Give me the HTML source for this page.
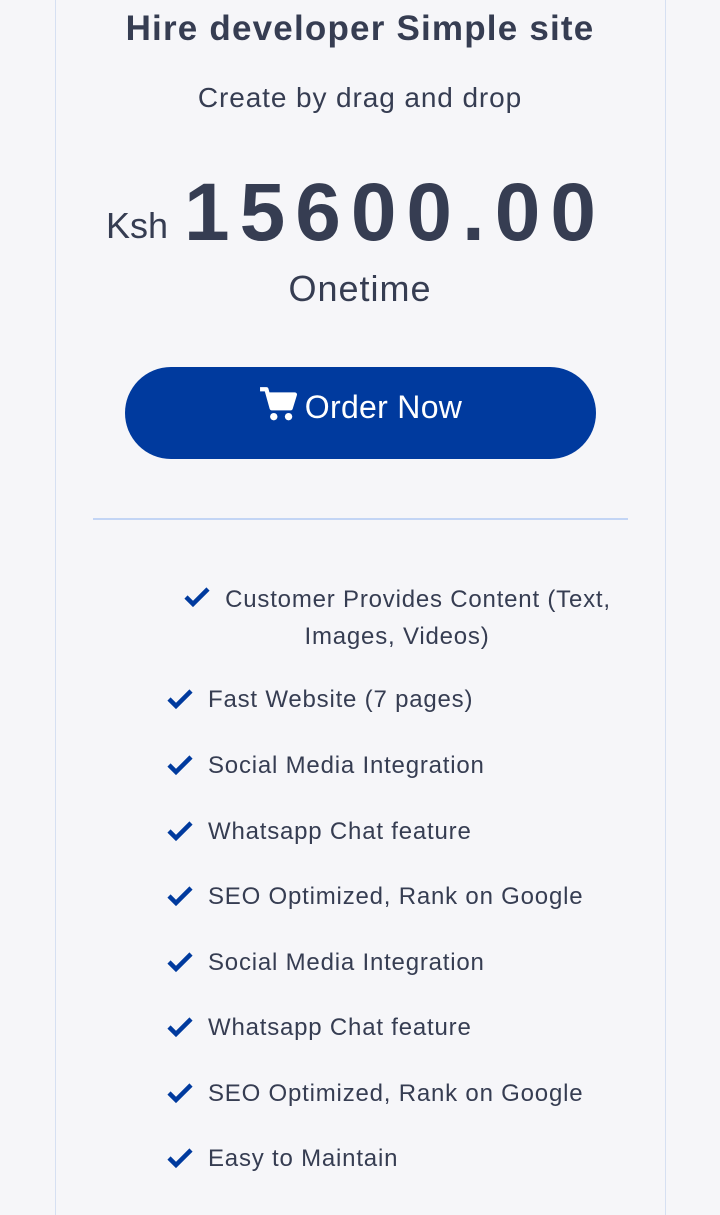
<!DOCTYPE html>
<html><head><meta charset="utf-8"><style>
body{margin:0;width:720px;height:1208px;background:#f6f6f9;font-family:"Liberation Sans",sans-serif;color:#363d52;position:relative;overflow:hidden}
.card{position:absolute;left:55px;top:-5px;width:609px;height:1220px;border-left:1px solid #d6e0f2;border-right:1px solid #d6e0f2}
.t{position:absolute;left:0;width:720px;text-align:center;white-space:nowrap}
.btn{position:absolute;left:125px;top:367px;width:471px;height:92px;border-radius:46px;background:#003a9e;color:#fff;font-size:32px;text-align:center;line-height:80px;letter-spacing:0.3px}
.hr{position:absolute;left:93px;top:518px;width:535px;height:2px;background:#c3d5f5}
.it{position:absolute;left:166px;font-size:24px;white-space:nowrap;letter-spacing:0.8px}
.it svg{position:absolute;left:0;top:2px}
.it span{position:absolute;left:42px;top:0}
</style></head><body>
<div class="card"></div>
<div class="t" style="top:9px;font-size:35px;font-weight:bold;letter-spacing:1.2px">Hire developer Simple site</div>
<div class="t" style="top:82px;font-size:28px;letter-spacing:0.9px">Create by drag and drop</div>
<div style="position:absolute;left:106px;top:205px;font-size:36px">Ksh</div>
<div style="position:absolute;left:184px;top:166px;font-size:82px;font-weight:bold;letter-spacing:10px">15600.00</div>
<div class="t" style="top:268px;font-size:36px;letter-spacing:1px">Onetime</div>
<div class="btn"><svg width="38" height="36" viewBox="0 0 36 34" style="vertical-align:-4px;margin-right:8px"><path d="M1 3h6l5 18h18l4-13H9" fill="none" stroke="#fff" stroke-width="4" stroke-linejoin="round"/><path d="M10 8h24l-4 13H12z" fill="#fff"/><circle cx="14" cy="29" r="3.5" fill="#fff"/><circle cx="28" cy="29" r="3.5" fill="#fff"/></svg>Order Now</div>
<div class="hr"></div>
<div style="position:absolute;left:160px;top:581px;width:474px;font-size:24px;text-align:center;line-height:37px;letter-spacing:0.8px;white-space:nowrap"><svg width="28" height="22" viewBox="0 0 28 22" style="vertical-align:-1px;margin-right:14px"><path d="M3 11l7 7L25 3" fill="none" stroke="#003a9e" stroke-width="4.5"/></svg>Customer Provides Content (Text,<br>Images, Videos)</div>
<div class="it" style="top:686px"><svg width="28" height="22" viewBox="0 0 28 22"><path d="M3 11l7 7L25 3" fill="none" stroke="#003a9e" stroke-width="4.5"/></svg><span>Fast Website (7 pages)</span></div>
<div class="it" style="top:752px"><svg width="28" height="22" viewBox="0 0 28 22"><path d="M3 11l7 7L25 3" fill="none" stroke="#003a9e" stroke-width="4.5"/></svg><span>Social Media Integration</span></div>
<div class="it" style="top:818px"><svg width="28" height="22" viewBox="0 0 28 22"><path d="M3 11l7 7L25 3" fill="none" stroke="#003a9e" stroke-width="4.5"/></svg><span>Whatsapp Chat feature</span></div>
<div class="it" style="top:883px"><svg width="28" height="22" viewBox="0 0 28 22"><path d="M3 11l7 7L25 3" fill="none" stroke="#003a9e" stroke-width="4.5"/></svg><span>SEO Optimized, Rank on Google</span></div>
<div class="it" style="top:949px"><svg width="28" height="22" viewBox="0 0 28 22"><path d="M3 11l7 7L25 3" fill="none" stroke="#003a9e" stroke-width="4.5"/></svg><span>Social Media Integration</span></div>
<div class="it" style="top:1014px"><svg width="28" height="22" viewBox="0 0 28 22"><path d="M3 11l7 7L25 3" fill="none" stroke="#003a9e" stroke-width="4.5"/></svg><span>Whatsapp Chat feature</span></div>
<div class="it" style="top:1080px"><svg width="28" height="22" viewBox="0 0 28 22"><path d="M3 11l7 7L25 3" fill="none" stroke="#003a9e" stroke-width="4.5"/></svg><span>SEO Optimized, Rank on Google</span></div>
<div class="it" style="top:1145px"><svg width="28" height="22" viewBox="0 0 28 22"><path d="M3 11l7 7L25 3" fill="none" stroke="#003a9e" stroke-width="4.5"/></svg><span>Easy to Maintain</span></div>
</body></html>
